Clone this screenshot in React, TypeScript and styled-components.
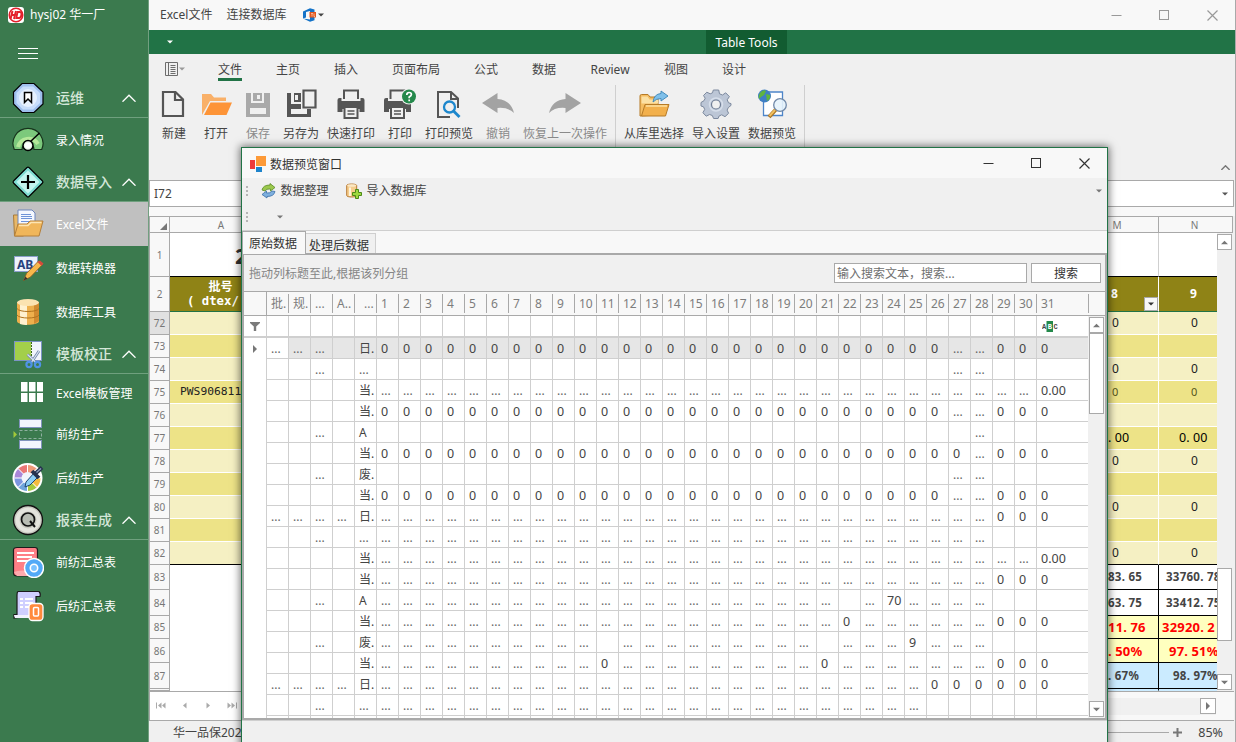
import React from "react";
import styled, { createGlobalStyle, css } from "styled-components";

const GREEN = "#217346";
const LINE = "#a9a9a9";

const GlobalStyle = createGlobalStyle`
  * { box-sizing: border-box; }
  html, body { margin: 0; padding: 0; overflow: hidden; background: #f0f0f0; }
  body { font-family: "Noto Sans", "Noto Sans CJK SC", sans-serif; font-size: 12px; line-height: 16px; color: #444; }
  svg { display: block; flex: none; }
`;

const Screen = styled.div`
  display: flex;
  width: 1236px;
  height: 742px;
  overflow: hidden;
  position: relative;
`;

/* ---------- Sidebar ---------- */

const Sidebar = styled.nav`
  width: 149px;
  flex: none;
  background: #3b7a4e;
  border-right: 1px solid #729f80;
  display: flex;
  flex-direction: column;
  color: #fff;
`;
const Brand = styled.div`
  height: 30px;
  padding-left: 8px;
  display: flex;
  align-items: center;
  gap: 6px;
  white-space: nowrap;
`;
const MenuToggle = styled.div`
  height: 48px;
  padding: 18px 0 0 18px;
`;
const SideRow = styled.div<{ $h: number; $group?: boolean; $active?: boolean }>`
  height: ${(p) => p.$h}px;
  flex: none;
  display: flex;
  align-items: center;
  padding-left: 12px;
  white-space: nowrap;
  background: ${(p) => (p.$active ? "#c0c0c0" : "transparent")};
  ${(p) =>
    p.$group &&
    css`
      font-size: 14px;
      font-weight: 500;
      color: #d3e6d8;
      border-bottom: 1px solid #6fa07e;
    `}
`;
const SideLabel = styled.span`
  margin-left: 12px;
  padding-top: 1px;
  flex: 1;
`;
const SideChevron = styled.span`
  width: 26px;
  padding-top: 1px;
`;

/* ---------- Main window ---------- */

const Main = styled.main`
  flex: 1;
  min-width: 0;
  display: flex;
  flex-direction: column;
  border-right: 1px solid ${LINE};
`;
const TitleBar = styled.div`
  height: 30px;
  flex: none;
  background: #f8f8f8;
  display: flex;
  align-items: center;
  padding: 0 17px 0 11px;
`;
const MenuItem = styled.span`
  margin-right: 14px;
  padding-bottom: 1px;
  white-space: nowrap;
`;
const Spacer = styled.span`
  flex: 1;
`;
const WindowControls = styled.div`
  display: flex;
  gap: 37px;
  align-items: center;
`;
const QuickBar = styled.div`
  height: 24px;
  flex: none;
  background: ${GREEN};
  display: flex;
  padding-left: 18px;
  align-items: center;
`;
const ContextTab = styled.div`
  margin-left: 533px;
  width: 81px;
  height: 24px;
  line-height: 25px;
  text-align: center;
  color: #fff;
  background: #125c31;
`;
const Ribbon = styled.div`
  height: 126px;
  flex: none;
  background: #f0f0f0;
  display: flex;
  flex-direction: column;
`;
const RibbonTabs = styled.div`
  height: 31px;
  display: flex;
  align-items: flex-start;
  padding: 8px 0 0 16px;
`;
const AppButton = styled.div`
  width: 53px;
  display: flex;
  align-items: center;
  gap: 1px;
`;
const RibbonTab = styled.div<{ $active?: boolean; $w?: number }>`
  margin-right: 34px;
  width: ${(p) => p.$w ?? 24}px;
  height: 19px;
  text-align: center;
  white-space: nowrap;
  border-bottom: 3px solid ${(p) => (p.$active ? GREEN : "transparent")};
`;
const RibbonBody = styled.div`
  flex: 1;
  display: flex;
  padding-left: 4px;
`;
const RibbonButton = styled.div<{ $w: number; $disabled?: boolean }>`
  width: ${(p) => p.$w}px;
  display: flex;
  flex-direction: column;
  align-items: center;
  padding-top: 3px;
  gap: 6px;
  white-space: nowrap;
  color: ${(p) => (p.$disabled ? "#8a8a8a" : "#444")};
`;
const RibbonSep = styled.div`
  width: 1px;
  margin: 0 4px;
  background: #cfcfcf;
`;
const RibbonFold = styled.div`
  align-self: flex-end;
  margin: 0 5px 10px 0;
`;
const FormulaBar = styled.div`
  height: 27px;
  flex: none;
  margin-right: 1px;
  border: 1px solid ${LINE};
  background: #fff;
  padding: 0 5px 0 4px;
  display: flex;
  align-items: center;
`;
const SheetGap = styled.div`
  height: 9px;
  flex: none;
  background: #f8f8f8;
`;

/* ---------- Spreadsheet ---------- */

const Sheet = styled.div`
  height: 475px;
  flex: none;
  display: flex;
  background: #f0f0f0;
  margin-right: 1px;
  border-left: 1px solid ${LINE};
`;
const SheetGrid = styled.div`
  width: 1067px;
  overflow: hidden;
  background: #fff;
`;
const SheetRow = styled.div<{ $h: number }>`
  display: flex;
  height: ${(p) => p.$h}px;
  width: 1083px;
`;
const ColHead = styled.div<{ $w: number }>`
  width: ${(p) => p.$w}px;
  flex: none;
  border-top: 1px solid ${LINE};
  border-bottom: 1px solid ${LINE};
  border-right: 1px solid ${LINE};
  background: #f8f8f8;
  font-size: 10px;
  line-height: 17px;
  color: #777;
  text-align: center;
`;
const Corner = styled(ColHead)`
  display: flex;
  justify-content: flex-end;
  align-items: flex-end;
  padding: 0 2px 2px 0;
`;
const RowHead = styled.div<{ $on?: boolean }>`
  width: 20px;
  flex: none;
  border-right: 1px solid ${LINE};
  border-bottom: 1px solid ${LINE};
  background: ${(p) => (p.$on ? "#e1e1e1" : "#f8f8f8")};
  color: #777;
  font-size: 10px;
  display: flex;
  align-items: center;
  justify-content: center;
`;
type CellLook = { $w: number; $bg: string; $right: string; $bottom: string };
const SheetCell = styled.div<CellLook>`
  width: ${(p) => p.$w}px;
  flex: none;
  background: ${(p) => p.$bg};
  border-right: 1px solid ${(p) => p.$right};
  border-bottom: 1px solid ${(p) => p.$bottom};
  display: flex;
  align-items: center;
  overflow: hidden;
  white-space: nowrap;
  color: #222;
  position: relative;
`;
const CellText = styled.span<{ $x: number; $kind?: string }>`
  padding-left: ${(p) => p.$x}px;
  ${(p) => p.$kind === "head" && css`font-weight: 700; font-size: 12px; color: #fff;`}
  ${(p) => p.$kind === "bold" && css`font-weight: 700; font-size: 11.5px; letter-spacing: 0.25px; color: #444;`}
  ${(p) => p.$kind === "red" && css`font-weight: 700; font-size: 13px; letter-spacing: 0.2px; color: #f00;`}
  ${(p) => p.$kind === "song" && css`font-size: 12.5px; color: #000;`}
  ${(p) => p.$kind === "code" && css`font-family: "DejaVu Sans Mono", monospace; font-size: 11.3px;`}
  ${(p) => p.$kind === "title" && css`font-weight: 700; font-size: 22px; color: #333;`}
  ${(p) => p.$kind === "olive" && css`font-size: 11px; color: #55551a;`}
`;
const Point = styled.span`
  letter-spacing: 3.5px;
`;
const BatchHead = styled.div`
  width: 102px;
  text-align: center;
  font-weight: 700;
  color: #fff;
  line-height: 14px;
`;
const BatchName = styled.div`
  height: 14px;
  padding-right: 1px;
`;
const BatchUnit = styled.div`
  height: 14px;
  font-family: "DejaVu Sans Mono", monospace;
  font-size: 12.300px;
  text-align: left;
  padding-left: 17px;
  white-space: pre;
`;
const FilterDrop = styled.span`
  position: absolute;
  right: 0;
  bottom: 0;
  width: 14px;
  height: 14px;
  border: 1px solid ${LINE};
  background: #f8f8f8;
  display: flex;
  align-items: center;
  justify-content: center;
`;
const SheetScroll = styled.div`
  width: 16px;
  display: flex;
  flex-direction: column;
`;
const ScrollHead = styled.div`
  height: 17px;
  border: solid ${LINE};
  border-width: 1px 1px 1px 0;
  background: #f8f8f8;
`;
const ScrollBox = styled.div<{ $h?: number; $mt?: number; $w?: number }>`
  width: ${(p) => p.$w ?? 15}px;
  height: ${(p) => p.$h ?? 16}px;
  margin-top: ${(p) => p.$mt ?? 0}px;
  flex: none;
  border: 1px solid ${LINE};
  background: #fff;
  display: flex;
  align-items: center;
  justify-content: center;
`;
const SheetFooter = styled.div`
  height: 30px;
  flex: none;
  margin-right: 1px;
  border: solid ${LINE};
  border-width: 1px 0 1px 1px;
  background: #f8f8f8;
  display: flex;
  align-items: center;
`;
const SheetNav = styled.div`
  width: 940px;
  height: 28px;
  background: #fff;
  padding: 0 0 2px 6px;
  display: flex;
  align-items: center;
  gap: 13.500px;
`;
const HScroll = styled.div`
  flex: 1;
  height: 17px;
  margin-right: 18px;
  background: #f0f0f0;
  display: flex;
  justify-content: flex-end;
`;
const StatusBar = styled.div`
  flex: 1;
  background: #f0f0f0;
  display: flex;
  align-items: center;
  padding: 2px 12px 0 24px;
`;
const ZoomTrack = styled.div`
  width: 110px;
  height: 1px;
  background: ${LINE};
  margin-right: 4px;
`;
const ZoomValue = styled.span`
  margin-left: 16px;
  font-size: 12.5px;
`;

/* ---------- Dialog ---------- */

const Dialog = styled.section`
  position: absolute;
  left: 241px;
  top: 147px;
  width: 867px;
  height: 620px;
  border: 1px solid ${GREEN};
  background: #f0f0f0;
  box-shadow: 0 0 8px 1px rgba(0, 0, 0, 0.55);
  display: flex;
  flex-direction: column;
`;
const DialogTitle = styled.header`
  height: 30px;
  flex: none;
  background: #f8f8f8;
  display: flex;
  align-items: center;
  padding: 0 17px 0 7px;
  gap: 4px;
  color: #333;
`;
const DialogName = styled.span`
  padding-top: 3px;
`;
const ToolRow = styled.div`
  height: 26px;
  flex: none;
  display: flex;
  align-items: center;
  padding: 0 5px 0 4px;
  white-space: nowrap;
`;
const ToolLabel = styled.span`
  margin: 0 17.500px 0 4.500px;
`;
const TabStrip = styled.div`
  height: 25px;
  flex: none;
  border-top: 1px solid #cfcfcf;
  border-bottom: 2px solid ${LINE};
  background: #f8f8f8;
  display: flex;
  align-items: flex-end;
`;
const Tab = styled.div<{ $on?: boolean; $w: number }>`
  width: ${(p) => p.$w}px;
  height: ${(p) => (p.$on ? 23 : 20)}px;
  line-height: ${(p) => (p.$on ? 24 : 23)}px;
  margin-bottom: ${(p) => (p.$on ? -1 : 0)}px;
  padding-left: ${(p) => (p.$on ? 6 : 3)}px;
  white-space: nowrap;
  color: #333;
  border: 1px solid ${(p) => (p.$on ? LINE : "#cfcfcf")};
  border-bottom: 0;
  border-left-width: ${(p) => (p.$on ? 1 : 0)}px;
  background: ${(p) => (p.$on ? "#f8f8f8" : "#f0f0f0")};
`;
const GridFrame = styled.div`
  height: 465px;
  flex: none;
  border: solid ${LINE};
  border-width: 0 2px 2px 2px;
  display: flex;
  flex-direction: column;
  background: #fff;
`;
const GroupPanel = styled.div`
  height: 37px;
  flex: none;
  border-bottom: 1px solid ${LINE};
  background: #f0f0f0;
  display: flex;
  align-items: center;
  padding: 0 4px 0 5px;
  color: #858585;
`;
const GroupHint = styled.span`
  padding-top: 2px;
`;
const SearchInput = styled.div`
  width: 193px;
  height: 20px;
  border: 1px solid ${LINE};
  background: #fff;
  padding: 2px 0 0 2px;
  margin-right: 4px;
  color: #6f6f6f;
`;
const SearchButton = styled.div`
  width: 70px;
  height: 20px;
  border: 1px solid ${LINE};
  background: #fff;
  padding-top: 2px;
  text-align: center;
  color: #333;
`;
const HeadRow = styled.div`
  height: 24px;
  flex: none;
  border-bottom: 1px solid ${LINE};
  background: #f8f8f8;
  display: flex;
`;
const HeadCell = styled.div<{ $w: number; $pad: number; $full?: boolean }>`
  width: ${(p) => p.$w}px;
  flex: none;
  height: ${(p) => (p.$full ? 23 : 19)}px;
  margin-top: ${(p) => (p.$full ? 0 : 2)}px;
  border-right: 1px solid ${LINE};
  padding-left: ${(p) => p.$pad}px;
  line-height: 20px;
  color: #7d7d7d;
  overflow: hidden;
  white-space: nowrap;
`;
const GridBody = styled.div`
  flex: 1;
  min-height: 0;
  display: flex;
`;
const Rows = styled.div`
  width: 844px;
  overflow: hidden;
`;
const DataRow = styled.div<{ $h: number }>`
  display: flex;
  height: ${(p) => p.$h}px;
`;
const Indicator = styled.div<{ $line?: boolean }>`
  width: 23px;
  flex: none;
  border-right: 1px solid #cfcfcf;
  border-bottom: ${(p) => (p.$line ? "2px solid #cfcfcf" : "0")};
  display: flex;
  align-items: center;
  justify-content: center;
`;
const DataCell = styled.div<{ $dots?: boolean; $digit?: boolean; $last?: boolean; $sel?: boolean; $thick?: boolean }>`
  width: ${(p) => (p.$last ? 51 : 22)}px;
  flex: none;
  border-right: ${(p) => (p.$last ? "0" : "1px solid #cfcfcf")};
  border-bottom: ${(p) => (p.$thick ? 2 : 1)}px solid #cfcfcf;
  background: ${(p) => (p.$sel ? "#e6e6e6" : "#fff")};
  padding-left: 4px;
  line-height: ${(p) => (p.$digit || p.$dots ? 21 : 22)}px;
  font-size: ${(p) => (p.$digit ? 12.5 : 12)}px;
  overflow: hidden;
  white-space: nowrap;
  color: ${(p) => (p.$dots ? "#666" : "#444")};
`;
const GridScroll = styled.div`
  width: 17px;
  background: #f0f0f0;
  padding: 1px 0 1px 1px;
  display: flex;
  flex-direction: column;
`;
const ScrollFill = styled.div`
  flex: 1;
`;
const DialogFoot = styled.div`
  flex: 1;
  border-top: 1px solid #cfcfcf;
`;

/* ---------- Icons ---------- */

const Arrow = ({ dir = "down", color = "#777", s = 6 }: { dir?: string; color?: string; s?: number }) => {
  const d: Record<string, string> = {
    down: "M0 1.500h6L3 4.500z",
    up: "M0 4.500h6L3 1.500z",
    right: "M1.500 0v6l3-3z",
    left: "M4.500 0v6l-3-3z",
  };
  return (
    <svg width={s} height={s} viewBox="0 0 6 6">
      <path d={d[dir]} fill={color} />
    </svg>
  );
};

const Chevron = ({ color = "#fff", w = 14 }: { color?: string; w?: number }) => (
  <svg width={w} height={w * 0.6} viewBox="0 0 14 8" fill="none" stroke={color} strokeWidth={w < 12 ? 2.2 : 1.3}>
    <path d="M.5 7.500 7 1l6.500 6.500" />
  </svg>
);

const Controls = ({ color }: { color: string }) => (
  <WindowControls>
    <svg width="11" height="11"><path d="M.5 5.500h10" stroke={color} /></svg>
    <svg width="11" height="11"><rect x=".5" y=".5" width="9" height="9" fill="none" stroke={color} /></svg>
    <svg width="11" height="11"><path d="M.5.5l10 10M10.500.5l-10 10" stroke={color} strokeWidth="1.200" /></svg>
  </WindowControls>
);

const Grip = () => (
  <svg width="3" height="12" fill="#b5b5b5">
    <rect width="2" height="2" x="0" y="1" /><rect width="2" height="2" y="5" /><rect width="2" height="2" y="9" />
  </svg>
);

const LogoIcon = () => (
  <svg width="16" height="16" viewBox="0 0 16 16">
    <rect width="16" height="16" rx="3" fill="#fff" />
    <circle cx="8" cy="8" r="6.800" fill="none" stroke="#e3202b" strokeWidth="1.500" />
    <path d="M4.500 4 2.500 12M8 4 6 12M3.500 8h4" stroke="#e3202b" strokeWidth="2" fill="none" />
    <path d="M9.500 5h2.500c2.500 0 1.500 6-1 6H8.300z" stroke="#e3202b" strokeWidth="1.900" fill="none" />
  </svg>
);

const OfficeIcon = () => (
  <svg width="16" height="14" viewBox="0 0 16 14">
    <path d="M1 3.500 8 .3l4.500 1.300v10.700L8 13.700 1 10.500l7 1V3L4 4v5.500l-3 1z" fill="#1473c8" />
    <rect x="7.500" y="4" width="6.500" height="5.500" fill="#e2561c" />
    <path d="M9 5.500h2M10 5.500v3M12 5.500v3h1" stroke="#f8c9b3" fill="none" strokeWidth=".8" />
  </svg>
);

const AppMenuIcon = () => (
  <svg width="13" height="14" viewBox="0 0 13 14" fill="none" stroke="#6d6d6d">
    <path d="M.5.5h12v13H.5zM3.500.5v13M5.500 3.500h5M5.500 5.500h5M5.500 7.500h5M5.500 9.500h5M5.500 11.500h5" />
  </svg>
);

const Box32 = ({ children }: { children: React.ReactNode }) => (
  <svg width="32" height="32" viewBox="0 0 32 32">{children}</svg>
);

const sideIcons: Record<string, React.ReactNode> = {
  ops: (
    <Box32>
      <path d="M10 1.500h12L31 10v12l-9 8.500H10L1.500 22V10z" fill="#9fc0ee" stroke="#000" strokeWidth="1.200" />
      <path d="M11 4.500h10l7 6.500v10l-7 6.500H11L4.500 21V11z" fill="#c7ddfb" />
      <circle cx="16" cy="16" r="9" fill="#e6f1ff" />
      <path d="M12.500 10.500h7v10L16 17l-3.500 3.500z" fill="#fff" stroke="#000" strokeWidth="1.500" />
    </Box32>
  ),
  gauge: (
    <Box32>
      <path d="M2.300 25.500A15 15 0 1 1 29.700 25.500H22a6 6 0 0 0-12 0z" fill="#7cc97c" stroke="#17331c" strokeWidth="1.200" />
      <path d="M6 23a11 11 0 0 1 20-3" fill="none" stroke="#b5e89a" strokeWidth="4" />
      <path d="M18 18 27.500 9" stroke="#000" strokeWidth="1.500" />
      <circle cx="16" cy="21.500" r="5" fill="#e8f4e4" stroke="#000" strokeWidth="1.500" />
      <circle cx="16" cy="21.500" r="3" fill="#fff" />
    </Box32>
  ),
  plus: (
    <Box32>
      <path d="M15 1.500q1-.8 2 0l13.500 13.500q.8 1 0 2L17 30.500q-1 .8-2 0L1.500 17q-.8-1 0-2z" fill="#7fdcd2" stroke="#000" strokeWidth="1.200" />
      <path d="M16 4.500 27.500 16 16 27.500 4.500 16z" fill="#c3f5ef" />
      <path d="M16 9v14M9 16h14" stroke="#000" strokeWidth="2.200" />
    </Box32>
  ),
  folder: (
    <Box32>
      <path d="M1.500 7h8l2 3v18h-9z" fill="#e8b868" stroke="#a87a38" />
      <path d="M6 2h14l3 3v16H6z" fill="#f4f8ff" stroke="#6c86bd" />
      <path d="M9 6.500h10M9 8.500h11M9 10.500h11M9 13.500h11" stroke="#6f94d8" />
      <path d="M6 16h9l3-3h13l-4 15H2.500z" fill="#f0b65a" stroke="#b5803a" />
      <path d="M7 17.500h9l3-3h10.500" stroke="#fde5b3" fill="none" strokeWidth="1.500" />
    </Box32>
  ),
  convert: (
    <Box32>
      <rect x="2.500" y="4.500" width="23" height="15" fill="#eef3fc" stroke="#8ca0cc" />
      <text x="5" y="16.500" fontSize="12" fontWeight="700" fill="#26417c">AB</text>
      <path d="M11.500 28.500l3-7L26.500 9l4 3.500-12 12.500z" fill="#f6b74b" stroke="#8a5a20" strokeWidth=".8" />
      <path d="M25.500 10 28 8.500l3.500 3-2 2.500z" fill="#d44b3c" />
      <path d="M11.500 28.500l2-4 2 2.200z" fill="#333" />
    </Box32>
  ),
  database: (
    <Box32>
      <path d="M5 6v19c0 5 22 5 22 0V6z" fill="#eeb04d" />
      <path d="M8 8v20c3 .8 5 1 7 1V9z" fill="#fff1cf" />
      <path d="M22 8v20l5-3V6z" fill="#d18a30" />
      <ellipse cx="16" cy="6.500" rx="11" ry="3.500" fill="#fbe3b0" />
      <path d="M5 12.500c2 4 20 4 22 0M5 19c2 4 20 4 22 0" stroke="#b2741f" fill="none" />
    </Box32>
  ),
  template: (
    <Box32>
      <rect x="2.500" y="3.500" width="27" height="19" fill="#f1f4fb" stroke="#7c93c4" />
      <rect x="3" y="4" width="16" height="18" fill="#a3cf4a" />
      <path d="M19.500 4v18" stroke="#3b6b1d" strokeDasharray="2 1" />
      <path d="M27 13 19 25M15.500 16.500 24.500 25" stroke="#6d83a8" strokeWidth="2.600" />
      <path d="M27 13 19 25M15.500 16.500 24.500 25" stroke="#dce5f2" strokeWidth="1.200" />
      <circle cx="17" cy="26.500" r="2.600" fill="none" stroke="#4f93e6" strokeWidth="2.200" />
      <circle cx="25.500" cy="26.500" r="2.600" fill="none" stroke="#4f93e6" strokeWidth="2.200" />
    </Box32>
  ),
  table: (
    <Box32>
      <path
        d="M9 5h6.500v9.500H9zM17 5h6.500v9.500H17zM25 5h6v9.500h-6zM9 16h6.500v9H9zM17 16h6.500v9H17zM25 16h6v9h-6z"
        fill="#fff"
      />
    </Box32>
  ),
  insert: (
    <Box32>
      <rect x="7.500" y="1.500" width="22" height="8" fill="#f3f6fd" stroke="#8193bd" />
      <rect x="7.500" y="12.500" width="22" height="8" fill="none" stroke="#8fb0a0" strokeDasharray="3 2" />
      <rect x="7.500" y="22.500" width="22" height="8" fill="#f3f6fd" stroke="#8193bd" />
      <path d="M1.500 13v7l3.500-3.500z" fill="#a3c93a" />
    </Box32>
  ),
  palette: (
    <Box32>
      <circle cx="15.500" cy="16" r="15" fill="#fff" />
      <path d="M15.500 16 15.500 3A13 13 0 0 0 6.300 6.800z" fill="#ea7676" />
      <path d="M15.500 16V3a13 13 0 0 1 9.200 3.800z" fill="#f09a7a" />
      <path d="M15.500 16 6.300 6.800A13 13 0 0 0 2.500 16z" fill="#a987d8" />
      <path d="M15.500 16h-13a13 13 0 0 0 3.800 9.200z" fill="#7d96e0" />
      <path d="M15.500 16 6.300 25.200a13 13 0 0 0 9.200 3.800z" fill="#70a5dc" />
      <path d="M15.500 16v13a13 13 0 0 0 9.200-3.800z" fill="#a5c83c" />
      <path d="M15.500 16 24.700 25.200a13 13 0 0 0 3.800-9.200z" fill="#f4bc3e" />
      <path d="M15.500 3v26M2.500 16h26M6.300 6.800l18.400 18.400M24.700 6.800 6.300 25.200" stroke="#fff" />
      <circle cx="15.500" cy="16" r="6" fill="#f2f5fb" />
      <path d="M13 25l1-5 8-9 4 4-8 8z" fill="#8fd0f5" stroke="#1c4674" />
      <path d="M20 9l7 7M23.500 11.500 30 5.500" stroke="#26334d" strokeWidth="3.800" />
      <path d="M24.500 10.500 29 6.500" stroke="#8ea0bd" strokeWidth="1.300" />
    </Box32>
  ),
  report: (
    <Box32>
      <circle cx="16" cy="16" r="14.500" fill="#c9c9c0" stroke="#111" strokeWidth="1.300" />
      <circle cx="16" cy="16" r="10.500" fill="none" stroke="#e4e4dd" strokeWidth="4" />
      <circle cx="16" cy="15.500" r="6.500" fill="#b9bdb4" stroke="#111" strokeWidth="1.700" />
      <path d="M18 17l5 6" stroke="#111" strokeWidth="2" />
    </Box32>
  ),
  summaryA: (
    <Box32>
      <path d="M5 1.500h18q2.500 0 2.500 2.500v26H5q-3.500 0-3.500-3V4q0-2.500 3.500-2.500z" fill="#ff7f86" stroke="#1c1c1c" strokeWidth="1.200" />
      <path d="M2 26q6-3 23 0v4H5z" fill="#ffaaae" />
      <path d="M5 7h17M5 11h15M5 15h11" stroke="#fff" strokeWidth="1.800" />
      <circle cx="22" cy="22" r="9.500" fill="#52a9f7" stroke="#fff" strokeWidth="1.500" />
      <circle cx="22" cy="22" r="3.700" fill="#7cc2ff" stroke="#fff" strokeWidth="1.600" />
    </Box32>
  ),
  summaryB: (
    <Box32>
      <path d="M6 1.500h21q2 2 1 5h-4V25l-22 3v-3.500h3V5q0-3 1-3.500z" fill="#cfcfff" stroke="#1c1c1c" strokeWidth="1.200" />
      <path d="M2 25h15v3H3z" fill="#f2f2ff" />
      <path d="M8 9h3M13 9h8M8 13h3M13 13h8M8 17h3M13 17h5" stroke="#fff" strokeWidth="2" />
      <rect x="17" y="13.500" width="14" height="17" rx="3.500" fill="#ff8a3c" stroke="#fff" strokeWidth="1.300" />
      <rect x="21.500" y="17.500" width="5" height="8.500" rx="1" fill="none" stroke="#fff" strokeWidth="1.500" />
    </Box32>
  ),
};

const Printer = ({ x = 0 }: { x?: number }) => (
  <g transform={`translate(${x} 0)`}>
    <path d="M8.500 11V2.500h14V11" fill="none" stroke="#555" strokeWidth="2" />
    <path d="M2 12q0-2 2-2h2v3h19v-3h2q2 0 2 2v12h-5v-5H7v5H2z" fill="#555" />
    <path d="M6 13h19v8H6z" fill="#555" />
    <rect x="9" y="19" width="13" height="11" fill="#f0f0f0" stroke="#555" strokeWidth="2" />
    <path d="M12 23h7M12 26h7" stroke="#555" strokeWidth="1.600" />
  </g>
);

const ribbonIcons: Record<string, React.ReactNode> = {
  new: <path d="M5 4h12.500L25 11.500V28H5zM17 4v8h8" fill="none" stroke="#555" strokeWidth="2.200" />,
  open: (
    <>
      <path d="M2 27V6h9l3 3.500h12V13H10z" fill="#f9b068" />
      <path d="M10.500 14.500H32L26.500 27H4z" fill="#fd9437" />
    </>
  ),
  save: (
    <>
      <path d="M4 5h24v24H4z" fill="#a9a9a9" />
      <path d="M9 5h13v10H9zM8 20h16v6H8z" fill="#f0f0f0" />
      <path d="M11 5h9v8h-9z" fill="#a9a9a9" />
      <path d="M15 7h3v4h-3z" fill="#f0f0f0" />
    </>
  ),
  saveAs: (
    <>
      <path d="M2 5h14v16h10v8H2z" fill="#555" />
      <path d="M6 5h3v9h8v2H6zM6 21h16v5H6z" fill="#f0f0f0" />
      <path d="M10 7h3v5h-3z" fill="#f0f0f0" />
      <path d="M18.500 2.500h12v17h-12z" fill="#f0f0f0" stroke="#555" strokeWidth="2.200" />
    </>
  ),
  quickPrint: <Printer x={0.5} />,
  print: (
    <>
      <Printer x={-2} />
      <circle cx="25" cy="8.500" r="8" fill="#f0f0f0" />
      <circle cx="25" cy="8.500" r="7" fill="#24894b" />
      <path d="M22.800 7q0-2.500 2.300-2.500T27.400 6.500q0 1.300-2.200 2.500v1.200M25.200 11.500v1.800" fill="none" stroke="#fff" strokeWidth="1.700" />
    </>
  ),
  preview: (
    <>
      <path d="M25 20v-9.500L18 4H5v25h12M18 4v7h7" fill="none" stroke="#555" strokeWidth="2" />
      <circle cx="16.500" cy="19" r="5.500" fill="#f0f0f0" stroke="#1d87cc" strokeWidth="2.300" />
      <path d="M20.500 23l6 6" stroke="#1d87cc" strokeWidth="2.800" />
    </>
  ),
  undo: <path d="M0 15 15.500 5v6Q29 12 32 25q-6-6-16.500-5v5z" fill="#a3a3a3" />,
  redo: <path d="M32 15 16.500 5v6Q3 12 0 25q6-6 16.500-5v5z" fill="#a3a3a3" />,
  pick: (
    <>
      <path d="M2 28V8q0-1.500 1.500-1.500H10L12 9h8v18z" fill="#f5bd62" stroke="#b67b27" />
      <path d="M3.500 8.500h6l2 3H20v4H3.500z" fill="#fbe0a3" />
      <path d="M7 16.500h24L27.500 28H3.500z" fill="#f2b04c" stroke="#b67b27" />
      <path d="M8 18h21" stroke="#fde0a0" strokeWidth="1.500" />
      <path d="M15 14q1-8 8-8.500V3l7 5-7 5v-2.500q-5 0-8 3.500z" fill="#7fc0ea" stroke="#3b83b5" strokeWidth=".9" />
    </>
  ),
  gear: (
    <>
      <path
        d="M13.300 2h5.400l.8 3.800 3 1.200 3.200-2.200 3.700 3.800-2.200 3.200 1.300 3L31 15.600v1.800l-2.700 2.200-1.200 2.500 1.500 3.200-3.600 3.400-3.300-1.900-2.600 1.200-1 2.500h-4.500l-1.300-3-2.700-1-3.400 1.700-3.300-3.500 1.800-3.300-1.200-2.600L1 18v-3.500l3-1.800 1.200-2.500L3.500 7.500l3.300-3.300 3.400 1.600 2.300-1z"
        fill="#bcc6d6" stroke="#7c899e" strokeWidth="1" strokeLinejoin="round"
      />
      <circle cx="16" cy="16.500" r="4.500" fill="#f0f0f0" stroke="#6f7d94" strokeWidth="1.200" />
      <circle cx="16" cy="16.500" r="6.500" fill="none" stroke="#d6deea" strokeWidth="1.500" />
    </>
  ),
  dataPreview: (
    <>
      <path d="M8 4h18.500v23.500h-19v-19" fill="#fff" stroke="#4d85c9" strokeWidth="1.300" />
      <circle cx="8.500" cy="8" r="6.500" fill="#3f7fc4" />
      <path d="M4 5q4-4 6-2l-2 4-3 2-2 2q-1-3 1-6zM10 6l4 1q1 4-3 6z" fill="#5fb53f" />
      <circle cx="24" cy="17" r="6.300" fill="#e6f3fc" fillOpacity=".9" stroke="#6f88a8" strokeWidth="1.300" />
      <path d="M19.500 22 13 29" stroke="#a87425" strokeWidth="4" />
      <path d="M19 22 13.500 28" stroke="#f2c05f" strokeWidth="2" />
    </>
  ),
};

const FormIcon = () => (
  <svg width="17" height="17" viewBox="0 0 17 17">
    <rect x="1" y="5" width="5" height="9" fill="#ee3b3b" />
    <rect x="7" y="1" width="10" height="10" fill="#fd9a38" />
    <rect x="7" y="12" width="6" height="5" fill="#1e84cc" />
  </svg>
);
const RefreshIcon = () => (
  <svg width="15" height="16" viewBox="0 0 15 16">
    <path d="M1 7q1-5 8-5V.5L14 4.500 9.500 8V6Q5 5.500 4 8z" fill="#9bc84d" stroke="#5b8b25" strokeWidth=".8" />
    <path d="M14 8.500q-1 5-8 5V15L1 11.500 5.500 8v2q4 .5 5.500-2z" fill="#7fb0de" stroke="#3b6ea8" strokeWidth=".8" />
  </svg>
);
const DbAddIcon = () => (
  <svg width="16" height="16" viewBox="0 0 16 16">
    <path d="M.7 2.500v10c0 2 10 2 10 0v-10c0-2-10-2-10 0z" fill="#f5cd8c" stroke="#b77a35" />
    <path d="M3 4.500v8.500h2V4.500z" fill="#fff3da" />
    <ellipse cx="5.700" cy="2.500" rx="4.500" ry="1.300" fill="#fbe8c5" />
    <path d="M9.500 6.500h3v3h3v3h-3v3h-3v-3h-3v-3h3z" fill="#9ed83f" stroke="#4c8a17" />
  </svg>
);
const FunnelIcon = () => (
  <svg width="10" height="9" viewBox="0 0 10 9"><path d="M0 0h10v1L6.200 4.500V9H3.800V4.500L0 1z" fill="#7a7a7a" /></svg>
);
const AbcIcon = () => (
  <svg width="16" height="11" viewBox="0 0 16 11" fontFamily="Liberation Mono" fontSize="7" fontWeight="700">
    <rect x="4.500" width="6.500" height="11" fill="#24894b" />
    <text x="0" y="8" fill="#444">A</text>
    <text x="5.700" y="8" fill="#fff">B</text>
    <text x="11.500" y="8" fill="#444">C</text>
  </svg>
);

const NavIcon = ({ dir, double }: { dir: number; double?: boolean }) => (
  <svg width="10" height="7" viewBox="0 0 10 7" fill="#aaa">
    <g transform={dir < 0 ? "translate(10 0) scale(-1 1)" : undefined}>
      {double ? <path d="M0 .5h1v6H0zM5.500.5v6l-3.500-3zM9.500.5v6L6 3.500z" /> : <path d="M6.500.5v6L3 3.500z" />}
    </g>
  </svg>
);

/* ---------- Data ---------- */

type SideItem = { label: string; icon: string; h: number; group?: boolean; active?: boolean };
const sideItems: SideItem[] = [
  { label: "运维", icon: "ops", h: 40, group: true },
  { label: "录入情况", icon: "gauge", h: 44 },
  { label: "数据导入", icon: "plus", h: 40, group: true },
  { label: "Excel文件", icon: "folder", h: 44, active: true },
  { label: "数据转换器", icon: "convert", h: 44 },
  { label: "数据库工具", icon: "database", h: 44 },
  { label: "模板校正", icon: "template", h: 40, group: true },
  { label: "Excel模板管理", icon: "table", h: 38 },
  { label: "前纺生产", icon: "insert", h: 44 },
  { label: "后纺生产", icon: "palette", h: 44 },
  { label: "报表生成", icon: "report", h: 40, group: true },
  { label: "前纺汇总表", icon: "summaryA", h: 44 },
  { label: "后纺汇总表", icon: "summaryB", h: 44 },
];

type RibbonItem = { label: string; icon: string; w: number; disabled?: boolean };
const fileButtons: RibbonItem[] = [
  { label: "新建", icon: "new", w: 42 },
  { label: "打开", icon: "open", w: 42 },
  { label: "保存", icon: "save", w: 42, disabled: true },
  { label: "另存为", icon: "saveAs", w: 44 },
  { label: "快速打印", icon: "quickPrint", w: 56 },
  { label: "打印", icon: "print", w: 42 },
  { label: "打印预览", icon: "preview", w: 56 },
  { label: "撤销", icon: "undo", w: 42, disabled: true },
  { label: "恢复上一次操作", icon: "redo", w: 92, disabled: true },
];
const dataButtons: RibbonItem[] = [
  { label: "从库里选择", icon: "pick", w: 68 },
  { label: "导入设置", icon: "gear", w: 56 },
  { label: "数据预览", icon: "dataPreview", w: 56 },
];

const DARK = "#ede387";
const PALE = "#f5f0c3";
type RowSpec = { n: string; h: number; bg: string; m?: string; v?: string; kind?: string; mx?: number; nx?: number; a?: string };
const bandRows: RowSpec[] = [
  { n: "72", h: 23, bg: PALE, m: "0", v: "0" },
  { n: "73", h: 23, bg: DARK },
  { n: "74", h: 23, bg: PALE, m: "0", v: "0" },
  { n: "75", h: 23, bg: DARK, m: "0", v: "0", kind: "olive", a: "PWS906811" },
  { n: "76", h: 23, bg: PALE },
  { n: "77", h: 23, bg: DARK, m: ".00", v: "0.00", kind: "song", mx: 32, nx: 20 },
  { n: "78", h: 23, bg: PALE, m: "0", v: "0" },
  { n: "79", h: 23, bg: DARK },
  { n: "80", h: 23, bg: PALE, m: "0", v: "0" },
  { n: "81", h: 23, bg: DARK },
  { n: "82", h: 23, bg: PALE, m: "0", v: "0" },
];
const totalRows: RowSpec[] = [
  { n: "83", h: 25, bg: "#fff", m: "83.65", v: "33760.78", kind: "bold", mx: 32, nx: 7 },
  { n: "84", h: 26, bg: "#fff", m: "63.75", v: "33412.75", kind: "bold", mx: 32, nx: 7 },
  { n: "85", h: 23, bg: "#ffffbf", m: "11.76", v: "32920.2", kind: "red", mx: 32, nx: 3 },
  { n: "86", h: 24, bg: "#ffffbf", m: ".50%", v: "97.51%", kind: "red", mx: 32, nx: 10 },
  { n: "87", h: 26, bg: "#cbebff", m: ".67%", v: "98.97%", kind: "bold", mx: 32, nx: 14 },
  { n: "", h: 2, bg: "#cbebff" },
];

const E = "...";
const fill = (v: string, n: number): string[] => Array(n).fill(v);
const zeros = (n: number) => fill("0", n);
const dots = (n: number) => fill(E, n);
const none = (n: number) => fill("", n);
const gridRows: string[][] = [
  [E, E, E, "", "日.", ...zeros(26), E, E, ...zeros(3)],
  ["", "", E, "", E, ...none(26), E, E, ...none(3)],
  [...none(4), "当.", ...dots(30), "0.00"],
  [...none(4), "当.", ...zeros(26), E, E, ...zeros(3)],
  ["", "", E, "", "A", ...none(27), E, ...none(3)],
  [...none(4), "当.", ...zeros(27), E, ...zeros(3)],
  ["", "", E, "", "废.", ...none(26), E, E, ...none(3)],
  [...none(4), "当.", ...zeros(26), E, E, ...zeros(3)],
  [...dots(4), "日.", ...dots(28), ...zeros(3)],
  ["", "", E, "", E, ...dots(28), ...none(3)],
  [...none(4), "当.", ...dots(30), "0.00"],
  [...none(4), "当.", ...dots(28), ...zeros(3)],
  ["", "", E, "", "A", ...dots(21), "", E, "70", ...dots(4), ...none(3)],
  [...none(4), "当.", ...dots(21), "0", ...dots(6), ...zeros(3)],
  ["", "", E, "", "废.", ...dots(10), "", ...dots(9), "", ...dots(3), "9", ...dots(3), ...none(3)],
  [...none(4), "当.", ...dots(10), "0", ...dots(9), "0", ...dots(7), ...zeros(3)],
  [...dots(4), "日.", ...dots(25), ...zeros(6)],
  ["", "", E, "", E, ...dots(25), ...none(6)],
  none(36),
];
const heads = ["批.", "规.", E, "A..", E, ...Array.from({ length: 31 }, (_, i) => String(i + 1))];

/* ---------- Parts ---------- */

const Fixed = ({ text }: { text: string }) => {
  const [a, b] = text.split(".");
  if (b === undefined) return <>{text}</>;
  return <>{a}<Point>.</Point>{b}</>;
};

const BandRow = ({ r, last }: { r: RowSpec; last?: boolean }) => {
  const bottom = last ? "#000" : "#fff";
  return (
    <SheetRow $h={r.h}>
      <RowHead $on={r.n === "72"}>{r.n}</RowHead>
      <SheetCell $w={906} $bg={r.bg} $right="#fff" $bottom={bottom}>
        {r.a && <CellText $x={10} $kind="code">{r.a}</CellText>}
      </SheetCell>
      <SheetCell $w={83} $bg={r.bg} $right="#fff" $bottom={bottom}>
        {r.m && <CellText $x={r.mx ?? 36} $kind={r.kind}><Fixed text={r.m} /></CellText>}
      </SheetCell>
      <SheetCell $w={71} $bg={r.bg} $right="#fff" $bottom={bottom}>
        {r.v && <CellText $x={r.nx ?? 32} $kind={r.kind}><Fixed text={r.v} /></CellText>}
      </SheetCell>
    </SheetRow>
  );
};

const TotalRow = ({ r }: { r: RowSpec }) => (
  <SheetRow $h={r.h}>
    <RowHead>{r.n}</RowHead>
    <SheetCell $w={906} $bg="#fff" $right="#000" $bottom="#fff" />
    <SheetCell $w={83} $bg={r.bg} $right="#000" $bottom={r.n ? "#000" : r.bg}>
      {r.m && <CellText $x={r.mx ?? 0} $kind={r.kind}><Fixed text={r.m} /></CellText>}
    </SheetCell>
    <SheetCell $w={71} $bg={r.bg} $right="#000" $bottom={r.n ? "#000" : r.bg}>
      {r.v && <CellText $x={r.nx ?? 0} $kind={r.kind}><Fixed text={r.v} /></CellText>}
    </SheetCell>
  </SheetRow>
);

const RibbonButtons = ({ items }: { items: RibbonItem[] }) => (
  <>
    {items.map((b) => (
      <RibbonButton key={b.label} $w={b.w} $disabled={b.disabled}>
        <Box32>{ribbonIcons[b.icon]}</Box32>
        {b.label}
      </RibbonButton>
    ))}
  </>
);

const SideNav = () => (
  <Sidebar>
    <Brand><LogoIcon />hysj02 华一厂</Brand>
    <MenuToggle>
      <svg width="20" height="12"><path d="M0 .5h20M0 5.500h20M0 10.500h20" stroke="#fff" /></svg>
    </MenuToggle>
    {sideItems.map((s) => (
      <SideRow key={s.label} $h={s.h} $group={s.group} $active={s.active}>
        {sideIcons[s.icon]}
        <SideLabel>{s.label}</SideLabel>
        {s.group && <SideChevron><Chevron /></SideChevron>}
      </SideRow>
    ))}
  </Sidebar>
);

const Spreadsheet = () => (
  <Sheet>
    <SheetGrid>
      <SheetRow $h={17}>
        <Corner $w={20}><svg width="7" height="7"><path d="M7 0v7H0z" fill="#777" /></svg></Corner>
        <ColHead $w={103}>A</ColHead>
        <ColHead $w={803} />
        <ColHead $w={83}>M</ColHead>
        <ColHead $w={72}>N</ColHead>
      </SheetRow>
      <SheetRow $h={44}>
        <RowHead>1</RowHead>
        <SheetCell $w={906} $bg="#fff" $right="#cfcfcf" $bottom="#000">
          <CellText $x={65} $kind="title">2</CellText>
        </SheetCell>
        <SheetCell $w={83} $bg="#fff" $right="#cfcfcf" $bottom="#000" />
        <SheetCell $w={71} $bg="#fff" $right="#cfcfcf" $bottom="#000" />
      </SheetRow>
      <SheetRow $h={35}>
        <RowHead>2</RowHead>
        <SheetCell $w={906} $bg="#8f8316" $right="#fff" $bottom={GREEN}>
          <BatchHead><BatchName>批号</BatchName><BatchUnit>( dtex/</BatchUnit></BatchHead>
        </SheetCell>
        <SheetCell $w={83} $bg="#8f8316" $right="#fff" $bottom={GREEN}>
          <CellText $x={35} $kind="head">8</CellText>
          <FilterDrop><Arrow color="#333" /></FilterDrop>
        </SheetCell>
        <SheetCell $w={71} $bg="#8f8316" $right="#fff" $bottom={GREEN}>
          <CellText $x={31} $kind="head">9</CellText>
        </SheetCell>
      </SheetRow>
      {bandRows.map((r, i) => <BandRow key={r.n} r={r} last={i === bandRows.length - 1} />)}
      {totalRows.map((r) => <TotalRow key={r.n} r={r} />)}
    </SheetGrid>
    <SheetScroll>
      <ScrollHead />
      <ScrollBox $mt={1}><Arrow dir="up" s={7} /></ScrollBox>
      <ScrollBox $h={73} $mt={318} />
      <ScrollBox $mt={33}><Arrow s={7} /></ScrollBox>
    </SheetScroll>
  </Sheet>
);

const PreviewDialog = () => (
  <Dialog>
    <DialogTitle>
      <FormIcon /><DialogName>数据预览窗口</DialogName>
      <Spacer />
      <Controls color="#333" />
    </DialogTitle>
    <ToolRow>
      <Grip />
      <Spacer style={{ flex: "0 0 12px" }} />
      <RefreshIcon /><ToolLabel>数据整理</ToolLabel>
      <DbAddIcon /><ToolLabel>导入数据库</ToolLabel>
      <Spacer /><Arrow />
    </ToolRow>
    <ToolRow>
      <Grip />
      <Spacer style={{ flex: "0 0 28px" }} />
      <Arrow />
    </ToolRow>
    <TabStrip>
      <Tab $w={64} $on>原始数据</Tab>
      <Tab $w={70}>处理后数据</Tab>
    </TabStrip>
    <GridFrame>
      <GroupPanel>
        <GroupHint>拖动列标题至此,根据该列分组</GroupHint>
        <Spacer />
        <SearchInput>输入搜索文本，搜索...</SearchInput>
        <SearchButton>搜索</SearchButton>
      </GroupPanel>
      <HeadRow>
        <HeadCell $w={23} $pad={0} $full />
        {heads.map((h, i) => (
          <HeadCell key={i} $w={i === 35 ? 52 : 22} $pad={i === 4 ? 9 : 4}>{h}</HeadCell>
        ))}
      </HeadRow>
      <GridBody>
        <Rows>
          <DataRow $h={22}>
            <Indicator $line><FunnelIcon /></Indicator>
            {heads.map((_, i) => (
              <DataCell key={i} $thick $last={i === 35}>
                {i === 35 && <svg width="17" height="17"><g transform="translate(1 5)"><AbcIcon /></g></svg>}
              </DataCell>
            ))}
          </DataRow>
          {gridRows.map((cells, r) => (
            <DataRow key={r} $h={21}>
              <Indicator>{r === 0 && <Arrow dir="right" s={8} />}</Indicator>
              {cells.map((c, i) => (
                <DataCell key={i} $dots={c === E} $digit={/^\d/.test(c)} $last={i === 35} $sel={r === 0 && i > 0}>
                  {c}
                </DataCell>
              ))}
            </DataRow>
          ))}
        </Rows>
        <GridScroll>
          <ScrollBox><Arrow dir="up" s={7} /></ScrollBox>
          <ScrollBox $h={81} />
          <ScrollFill />
          <ScrollBox><Arrow s={7} /></ScrollBox>
        </GridScroll>
      </GridBody>
    </GridFrame>
    <DialogFoot />
  </Dialog>
);

export default function App() {
  return (
    <Screen>
      <GlobalStyle />
      <SideNav />
      <Main>
        <TitleBar>
          <MenuItem>Excel文件</MenuItem>
          <MenuItem>连接数据库</MenuItem>
          <Spacer style={{ flex: "0 0 2px" }} />
          <OfficeIcon />
          <Arrow color="#444" />
          <Spacer />
          <Controls color="#999" />
        </TitleBar>
        <QuickBar>
          <Arrow color="#fff" />
          <ContextTab>Table Tools</ContextTab>
        </QuickBar>
        <Ribbon>
          <RibbonTabs>
            <AppButton><AppMenuIcon /><Arrow color="#999" /></AppButton>
            <RibbonTab $active>文件</RibbonTab>
            <RibbonTab>主页</RibbonTab>
            <RibbonTab>插入</RibbonTab>
            <RibbonTab $w={48}>页面布局</RibbonTab>
            <RibbonTab>公式</RibbonTab>
            <RibbonTab>数据</RibbonTab>
            <RibbonTab $w={40}>Review</RibbonTab>
            <RibbonTab>视图</RibbonTab>
            <RibbonTab>设计</RibbonTab>
          </RibbonTabs>
          <RibbonBody>
            <RibbonButtons items={fileButtons} />
            <RibbonSep />
            <RibbonButtons items={dataButtons} />
            <RibbonSep />
            <Spacer />
            <RibbonFold><Chevron color="#777" w={9} /></RibbonFold>
          </RibbonBody>
        </Ribbon>
        <FormulaBar>I72<Spacer /><Arrow color="#555" /></FormulaBar>
        <SheetGap />
        <Spreadsheet />
        <SheetFooter>
          <SheetNav>
            <NavIcon dir={1} double />
            <NavIcon dir={1} />
            <NavIcon dir={-1} />
            <NavIcon dir={-1} double />
          </SheetNav>
          <HScroll><ScrollBox $w={16}><Arrow dir="right" s={8} /></ScrollBox></HScroll>
        </SheetFooter>
        <StatusBar>
          华一品保202
          <Spacer />
          <ZoomTrack />
          <svg width="9" height="9"><path d="M4.500 0v9M0 4.500h9" stroke="#777" strokeWidth="2" /></svg>
          <ZoomValue>85%</ZoomValue>
        </StatusBar>
      </Main>
      <PreviewDialog />
    </Screen>
  );
}
